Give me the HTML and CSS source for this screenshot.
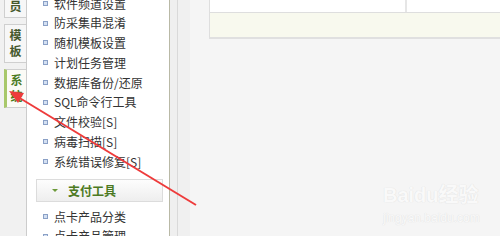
FILE: index.html
```html
<!DOCTYPE html>
<html lang="zh">
<head>
<meta charset="utf-8">
<title>系统菜单</title>
<link rel="stylesheet" href="styles.css">
</head>
<body>
<div class="app">
  <div class="tabs">
    <div class="tab tab-first">会<br>员</div>
    <div class="tab">模<br>板</div>
    <div class="tab tab-active">系<br>统</div>
  </div>
  <div class="menu">
    <ul class="items items-first">
      <li><span class="dot"></span>软件频道设置</li>
      <li><span class="dot"></span>防采集串混淆</li>
      <li><span class="dot"></span>随机模板设置</li>
      <li><span class="dot"></span>计划任务管理</li>
      <li><span class="dot"></span>数据库备份/还原</li>
      <li><span class="dot"></span>SQL命令行工具</li>
      <li><span class="dot"></span>文件校验[S]</li>
      <li><span class="dot"></span>病毒扫描[S]</li>
      <li><span class="dot"></span>系统错误修复[S]</li>
    </ul>
    <div class="group-head"><span class="caret"></span>支付工具</div>
    <ul class="items">
      <li><span class="dot"></span>点卡产品分类</li>
      <li><span class="dot"></span>点卡产品管理</li>
    </ul>
  </div>
  <div class="gutter"></div>
  <div class="main">
    <div class="grid-row">
      <div class="cell cell-wide"></div>
      <div class="cell"></div>
    </div>
    <div class="foot-row"></div>
  </div>
</div>
<div class="watermark">
  <div class="wm-logo">Baidu经验</div>
  <div class="wm-url">jingyan.baidu.com</div>
</div>
<svg class="annot" width="500" height="236" viewBox="0 0 500 236">
  <line x1="196" y1="205" x2="18" y2="97" stroke="#ee3b3b" stroke-width="2"/>
  <polygon points="9,91 24,93 18,103" fill="#ee3b3b"/>
</svg>
</body>
</html>
```
FILE: styles.css
```css
* { box-sizing: border-box; }
html, body { margin: 0; padding: 0; }
body {
  width: 500px;
  height: 236px;
  overflow: hidden;
  background: #f5f5f5;
  font-family: "Noto Sans CJK SC", "Noto Sans", sans-serif;
  font-size: 12px;
  color: #333;
  position: relative;
}
.app {
  display: flex;
  height: 236px;
  overflow: hidden;
}
.tabs {
  width: 26px;
  flex: none;
  background: #f1f1f1;
  display: flex;
  flex-direction: column;
  align-items: flex-end;
  gap: 6px;
}
.tab {
  width: 22px;
  border: 1px solid #cfcfcf;
  border-right: none;
  background: #f7f7f7;
  color: #45582c;
  font-weight: bold;
  font-size: 12px;
  line-height: 16px;
  text-align: center;
  padding: 2px 0 3px;
}
.tab-first { margin-top: -21px; }
.tab-active {
  background: #fbfbf6;
  border-left: 3px solid #a8c86a;
  color: #4a7a1e;
  width: 22px;
}
.menu {
  width: 144px;
  flex: none;
  background: #fff;
  border-left: 1px solid #cccccc;
  border-right: 1px solid #b9b9a6;
  overflow: hidden;
}
.items {
  list-style: none;
  margin: 0;
  padding: 0;
}
.items-first { margin-top: -6.5px; }
.items li {
  height: 19.8px;
  line-height: 19.8px;
  padding-left: 16px;
  display: flex;
  align-items: center;
  white-space: nowrap;
  color: #333;
}
.dot {
  width: 5px;
  height: 5px;
  border: 1px solid #8aa0c6;
  background: #d4e0f2;
  margin-right: 6px;
  flex: none;
}
.group-head {
  margin: 7px 6px 5px 9px;
  height: 23px;
  border: 1px solid #dcdcdc;
  background: linear-gradient(#fdfdfd, #eeeeee);
  display: flex;
  align-items: center;
  padding-left: 15px;
  color: #4c7a22;
  font-weight: bold;
  font-size: 12px;
}
.caret {
  width: 0;
  height: 0;
  border-left: 3px solid transparent;
  border-right: 3px solid transparent;
  border-top: 3px solid #6d9a3a;
  margin-right: 10px;
}
.gutter {
  width: 39px;
  flex: none;
  background: linear-gradient(to right, #efefef 0, #efefef 7px, #d9d9d9 7px, #d9d9d9 8px, #f0f0f0 8px, #f0f0f0 20px, #f5f5f5 20px);
}
.main {
  flex: 1;
  min-width: 0;
}
.grid-row {
  display: flex;
  height: 13px;
  border-left: 1px solid #dedede;
  border-bottom: 1px solid #dedede;
  background: #fff;
}
.cell { flex: 1; }
.cell-wide {
  flex: none;
  width: 197px;
  border-right: 2px solid #e6e6e6;
}
.foot-row {
  height: 26px;
  background: #f8f9ee;
  border-left: 1px solid #dedede;
  border-bottom: 2px solid #e0e0e0;
}
.watermark {
  position: absolute;
  left: 383px;
  top: 182px;
  color: #f9f9f9;
  text-shadow: 0 0 1px #e2e2e2, 0 0 1px #e2e2e2;
  font-family: "Liberation Sans", "Noto Sans CJK SC", sans-serif;
}
.wm-logo {
  font-size: 20px;
  font-weight: bold;
  line-height: 26px;
}
.wm-url {
  font-size: 12px;
  line-height: 16px;
  margin-top: 2px;
}
.annot {
  position: absolute;
  left: 0;
  top: 0;
  pointer-events: none;
}
```
